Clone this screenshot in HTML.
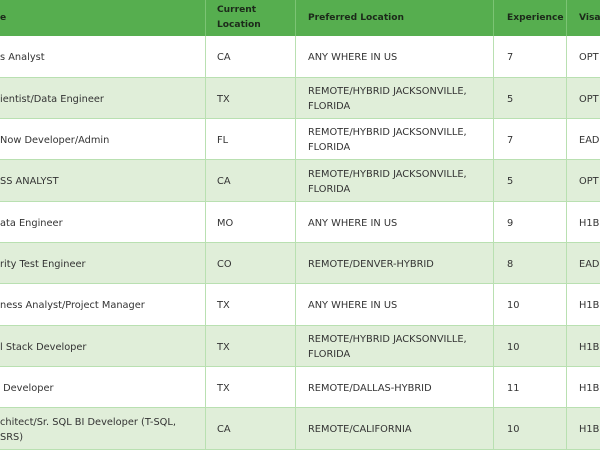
<!DOCTYPE html>
<html><head><meta charset="utf-8"><style>
*{margin:0;padding:0;box-sizing:border-box}
body{width:600px;height:450px;overflow:hidden;background:#fff;font-family:"DejaVu Sans","Liberation Sans",sans-serif;font-size:9.8px;color:#333}
.r{position:absolute;left:0;width:620px;display:flex;border-bottom:1.5px solid #b9e0b1}
.c{flex-shrink:0;display:flex;align-items:center;line-height:15px;border-right:1.5px solid #b9e0b1;height:100%;white-space:nowrap;overflow:hidden;padding-top:2px}
.c1{width:206px;padding-left:0}
.c2{width:90px;padding-left:11px}
.c3{width:198px;padding-left:12px}
.c4{width:73px;padding-left:13px}
.c5{width:50px;padding-left:12px;border-right:none}
.h{background:#56ae4f;color:#1c2a1a;font-weight:bold;border-bottom:none;font-size:9.1px}
.h .c{border-right-color:#7cc474;padding-top:0}
.g{background:#e0eed9}
</style></head><body>
<div class="r h" style="top:0;height:36px"><div class="c c1">e</div><div class="c c2">Current<br>Location</div><div class="c c3">Preferred Location</div><div class="c c4">Experience</div><div class="c c5">Visa</div></div>
<div class="r" style="top:36px;height:42px"><div class="c c1">s Analyst</div><div class="c c2">CA</div><div class="c c3">ANY WHERE IN US</div><div class="c c4">7</div><div class="c c5">OPT</div></div>
<div class="r g" style="top:78px;height:41px"><div class="c c1">ientist/Data Engineer</div><div class="c c2">TX</div><div class="c c3">REMOTE/HYBRID JACKSONVILLE,<br>FLORIDA</div><div class="c c4">5</div><div class="c c5">OPT</div></div>
<div class="r" style="top:119px;height:41px"><div class="c c1">Now Developer/Admin</div><div class="c c2">FL</div><div class="c c3">REMOTE/HYBRID JACKSONVILLE,<br>FLORIDA</div><div class="c c4">7</div><div class="c c5">EAD</div></div>
<div class="r g" style="top:160px;height:42px"><div class="c c1">SS ANALYST</div><div class="c c2">CA</div><div class="c c3">REMOTE/HYBRID JACKSONVILLE,<br>FLORIDA</div><div class="c c4">5</div><div class="c c5">OPT</div></div>
<div class="r" style="top:202px;height:41px"><div class="c c1">ata Engineer</div><div class="c c2">MO</div><div class="c c3">ANY WHERE IN US</div><div class="c c4">9</div><div class="c c5">H1B</div></div>
<div class="r g" style="top:243px;height:41px"><div class="c c1">rity Test Engineer</div><div class="c c2">CO</div><div class="c c3">REMOTE/DENVER-HYBRID</div><div class="c c4">8</div><div class="c c5">EAD</div></div>
<div class="r" style="top:284px;height:42px"><div class="c c1">ness Analyst/Project Manager</div><div class="c c2">TX</div><div class="c c3">ANY WHERE IN US</div><div class="c c4">10</div><div class="c c5">H1B</div></div>
<div class="r g" style="top:326px;height:41px"><div class="c c1">l Stack Developer</div><div class="c c2">TX</div><div class="c c3">REMOTE/HYBRID JACKSONVILLE,<br>FLORIDA</div><div class="c c4">10</div><div class="c c5">H1B</div></div>
<div class="r" style="top:367px;height:41px"><div class="c c1">&nbsp;Developer</div><div class="c c2">TX</div><div class="c c3">REMOTE/DALLAS-HYBRID</div><div class="c c4">11</div><div class="c c5">H1B</div></div>
<div class="r g" style="top:408px;height:42px"><div class="c c1">chitect/Sr. SQL BI Developer (T-SQL,<br>SRS)</div><div class="c c2">CA</div><div class="c c3">REMOTE/CALIFORNIA</div><div class="c c4">10</div><div class="c c5">H1B</div></div>
</body></html>
